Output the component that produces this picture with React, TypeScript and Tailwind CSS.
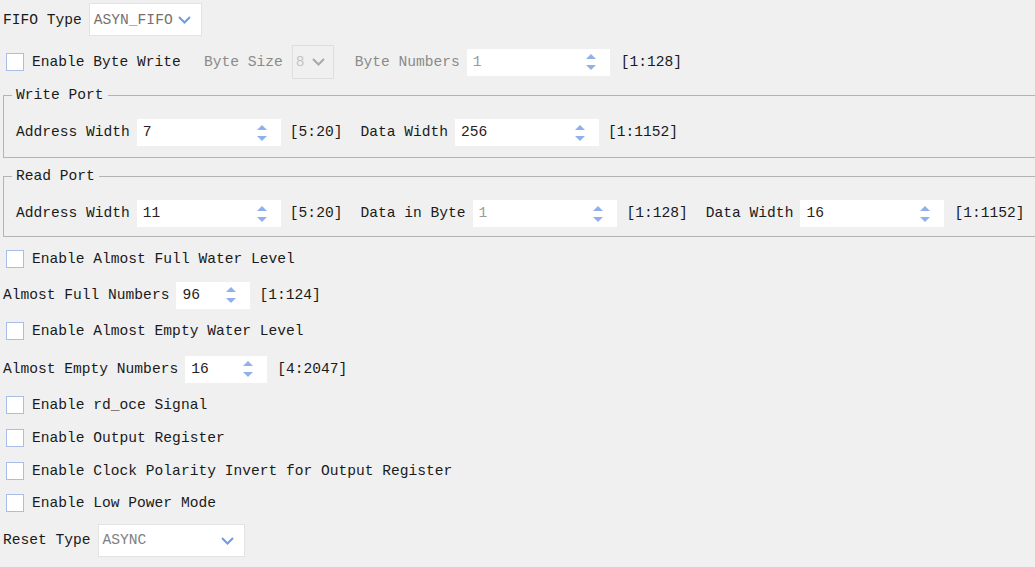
import React from "react";

const Chevron = ({ color = "#6f9ae6" }: { color?: string }) => (
  <svg width="13" height="8" viewBox="0 0 13 8" className="shrink-0">
    <polyline points="1,1 6.5,6.5 12,1" fill="none" stroke={color} strokeWidth="2" />
  </svg>
);

const Spinner = () => (
  <svg width="10" height="16" viewBox="0 0 10 16" className="shrink-0">
    <polygon points="0,5 5,0 10,5" fill="#8fb0ea" />
    <polygon points="0,11 10,11 5,16" fill="#8fb0ea" />
  </svg>
);

const Check = () => (
  <div className="w-[18px] h-[18px] bg-white border border-[#a9bde9] shrink-0" />
);

const Spin = ({ value, w, disabled }: { value: string; w: string; disabled?: boolean }) => (
  <div className={`${w} h-[27px] bg-white flex items-center justify-between pl-[6px] pr-[14px] shrink-0`}>
    <span className={disabled ? "text-[#9a9a9a]" : "text-[#2a2020]"}>{value}</span>
    <Spinner />
  </div>
);

const CheckRow = ({ label, mt }: { label: string; mt: string }) => (
  <div className={`${mt} h-[20px] flex items-center pl-[6px]`}>
    <Check />
    <span className="ml-[8px]">{label}</span>
  </div>
);

export default function App() {
  return (
    <div
      className="w-[1035px] h-[567px] overflow-hidden bg-[#f0f0f0] text-[#1a1a1a] text-[14.6px] leading-[17px] flex flex-col"
      style={{ fontFamily: '"Liberation Mono", "DejaVu Sans Mono", monospace' }}
    >
      {/* FIFO Type */}
      <div className="mt-[3px] h-[33px] flex items-center pl-[3px]">
        <span className="pt-[2px]">FIFO Type</span>
        <div className="ml-[7px] w-[113px] h-[33px] bg-white border border-[#e3e3e3] flex items-center justify-between pl-[4px] pr-[10px]">
          <span className="text-[#777070] pt-[2px]">ASYN_FIFO</span>
          <Chevron />
        </div>
      </div>

      {/* Byte write row */}
      <div className="mt-[9px] h-[34px] flex items-center pl-[6px]">
        <Check />
        <span className="ml-[8px]">Enable Byte Write</span>
        <span className="ml-[23px] text-[#8a8a8a]">Byte Size</span>
        <div className="ml-[9px] w-[42px] h-[34px] border border-[#dedede] flex items-center justify-between pl-[3px] pr-[8px]">
          <span className="text-[#c4c4c4]">8</span>
          <Chevron color="#a8a8a8" />
        </div>
        <span className="ml-[21px] text-[#8a8a8a]">Byte Numbers</span>
        <div className="ml-[7px]">
          <Spin value="1" w="w-[143px]" disabled />
        </div>
        <span className="ml-[11px]">[1:128]</span>
      </div>

      {/* Write Port */}
      <fieldset className="mt-[8px] ml-[3px] border border-r-0 border-[#b4b4b4] pl-[12px] pt-[16px] pb-[11px]">
        <legend className="ml-[-4px] px-[4px] leading-[16px]">Write Port</legend>
        <div className="flex items-center h-[27px]">
          <span>Address Width</span>
          <div className="ml-[7px]">
            <Spin value="7" w="w-[144px]" />
          </div>
          <span className="ml-[9px]">[5:20]</span>
          <span className="ml-[18px]">Data Width</span>
          <div className="ml-[7px]">
            <Spin value="256" w="w-[144px]" />
          </div>
          <span className="ml-[9px]">[1:1152]</span>
        </div>
      </fieldset>

      {/* Read Port */}
      <fieldset className="mt-[10px] ml-[3px] border border-r-0 border-[#b4b4b4] pl-[12px] pt-[16px] pb-[9px]">
        <legend className="ml-[-4px] px-[4px] leading-[16px]">Read Port</legend>
        <div className="flex items-center h-[27px]">
          <span>Address Width</span>
          <div className="ml-[7px]">
            <Spin value="11" w="w-[144px]" />
          </div>
          <span className="ml-[9px]">[5:20]</span>
          <span className="ml-[18px]">Data in Byte</span>
          <div className="ml-[7px]">
            <Spin value="1" w="w-[144px]" disabled />
          </div>
          <span className="ml-[10px]">[1:128]</span>
          <span className="ml-[18px]">Data Width</span>
          <div className="ml-[7px]">
            <Spin value="16" w="w-[144px]" />
          </div>
          <span className="ml-[10px]">[1:1152]</span>
        </div>
      </fieldset>

      <CheckRow label="Enable Almost Full Water Level" mt="mt-[12px]" />

      <div className="mt-[13px] h-[26px] flex items-center pl-[3px]">
        <span>Almost Full Numbers</span>
        <div className="ml-[7px]">
          <Spin value="96" w="w-[74px]" />
        </div>
        <span className="ml-[9px]">[1:124]</span>
      </div>

      <CheckRow label="Enable Almost Empty Water Level" mt="mt-[13px]" />

      <div className="mt-[15px] h-[26px] flex items-center pl-[3px]">
        <span>Almost Empty Numbers</span>
        <div className="ml-[7px]">
          <Spin value="16" w="w-[82px]" />
        </div>
        <span className="ml-[10px]">[4:2047]</span>
      </div>

      <CheckRow label="Enable rd_oce Signal" mt="mt-[13px]" />
      <CheckRow label="Enable Output Register" mt="mt-[13px]" />
      <CheckRow label="Enable Clock Polarity Invert for Output Register" mt="mt-[13px]" />
      <CheckRow label="Enable Low Power Mode" mt="mt-[12px]" />

      <div className="mt-[11px] h-[33px] flex items-center pl-[3px]">
        <span>Reset Type</span>
        <div className="ml-[7px] w-[147px] h-[33px] bg-white border border-[#e3e3e3] flex items-center justify-between pl-[4px] pr-[10px]">
          <span className="text-[#808080]">ASYNC</span>
          <Chevron />
        </div>
      </div>
    </div>
  );
}
